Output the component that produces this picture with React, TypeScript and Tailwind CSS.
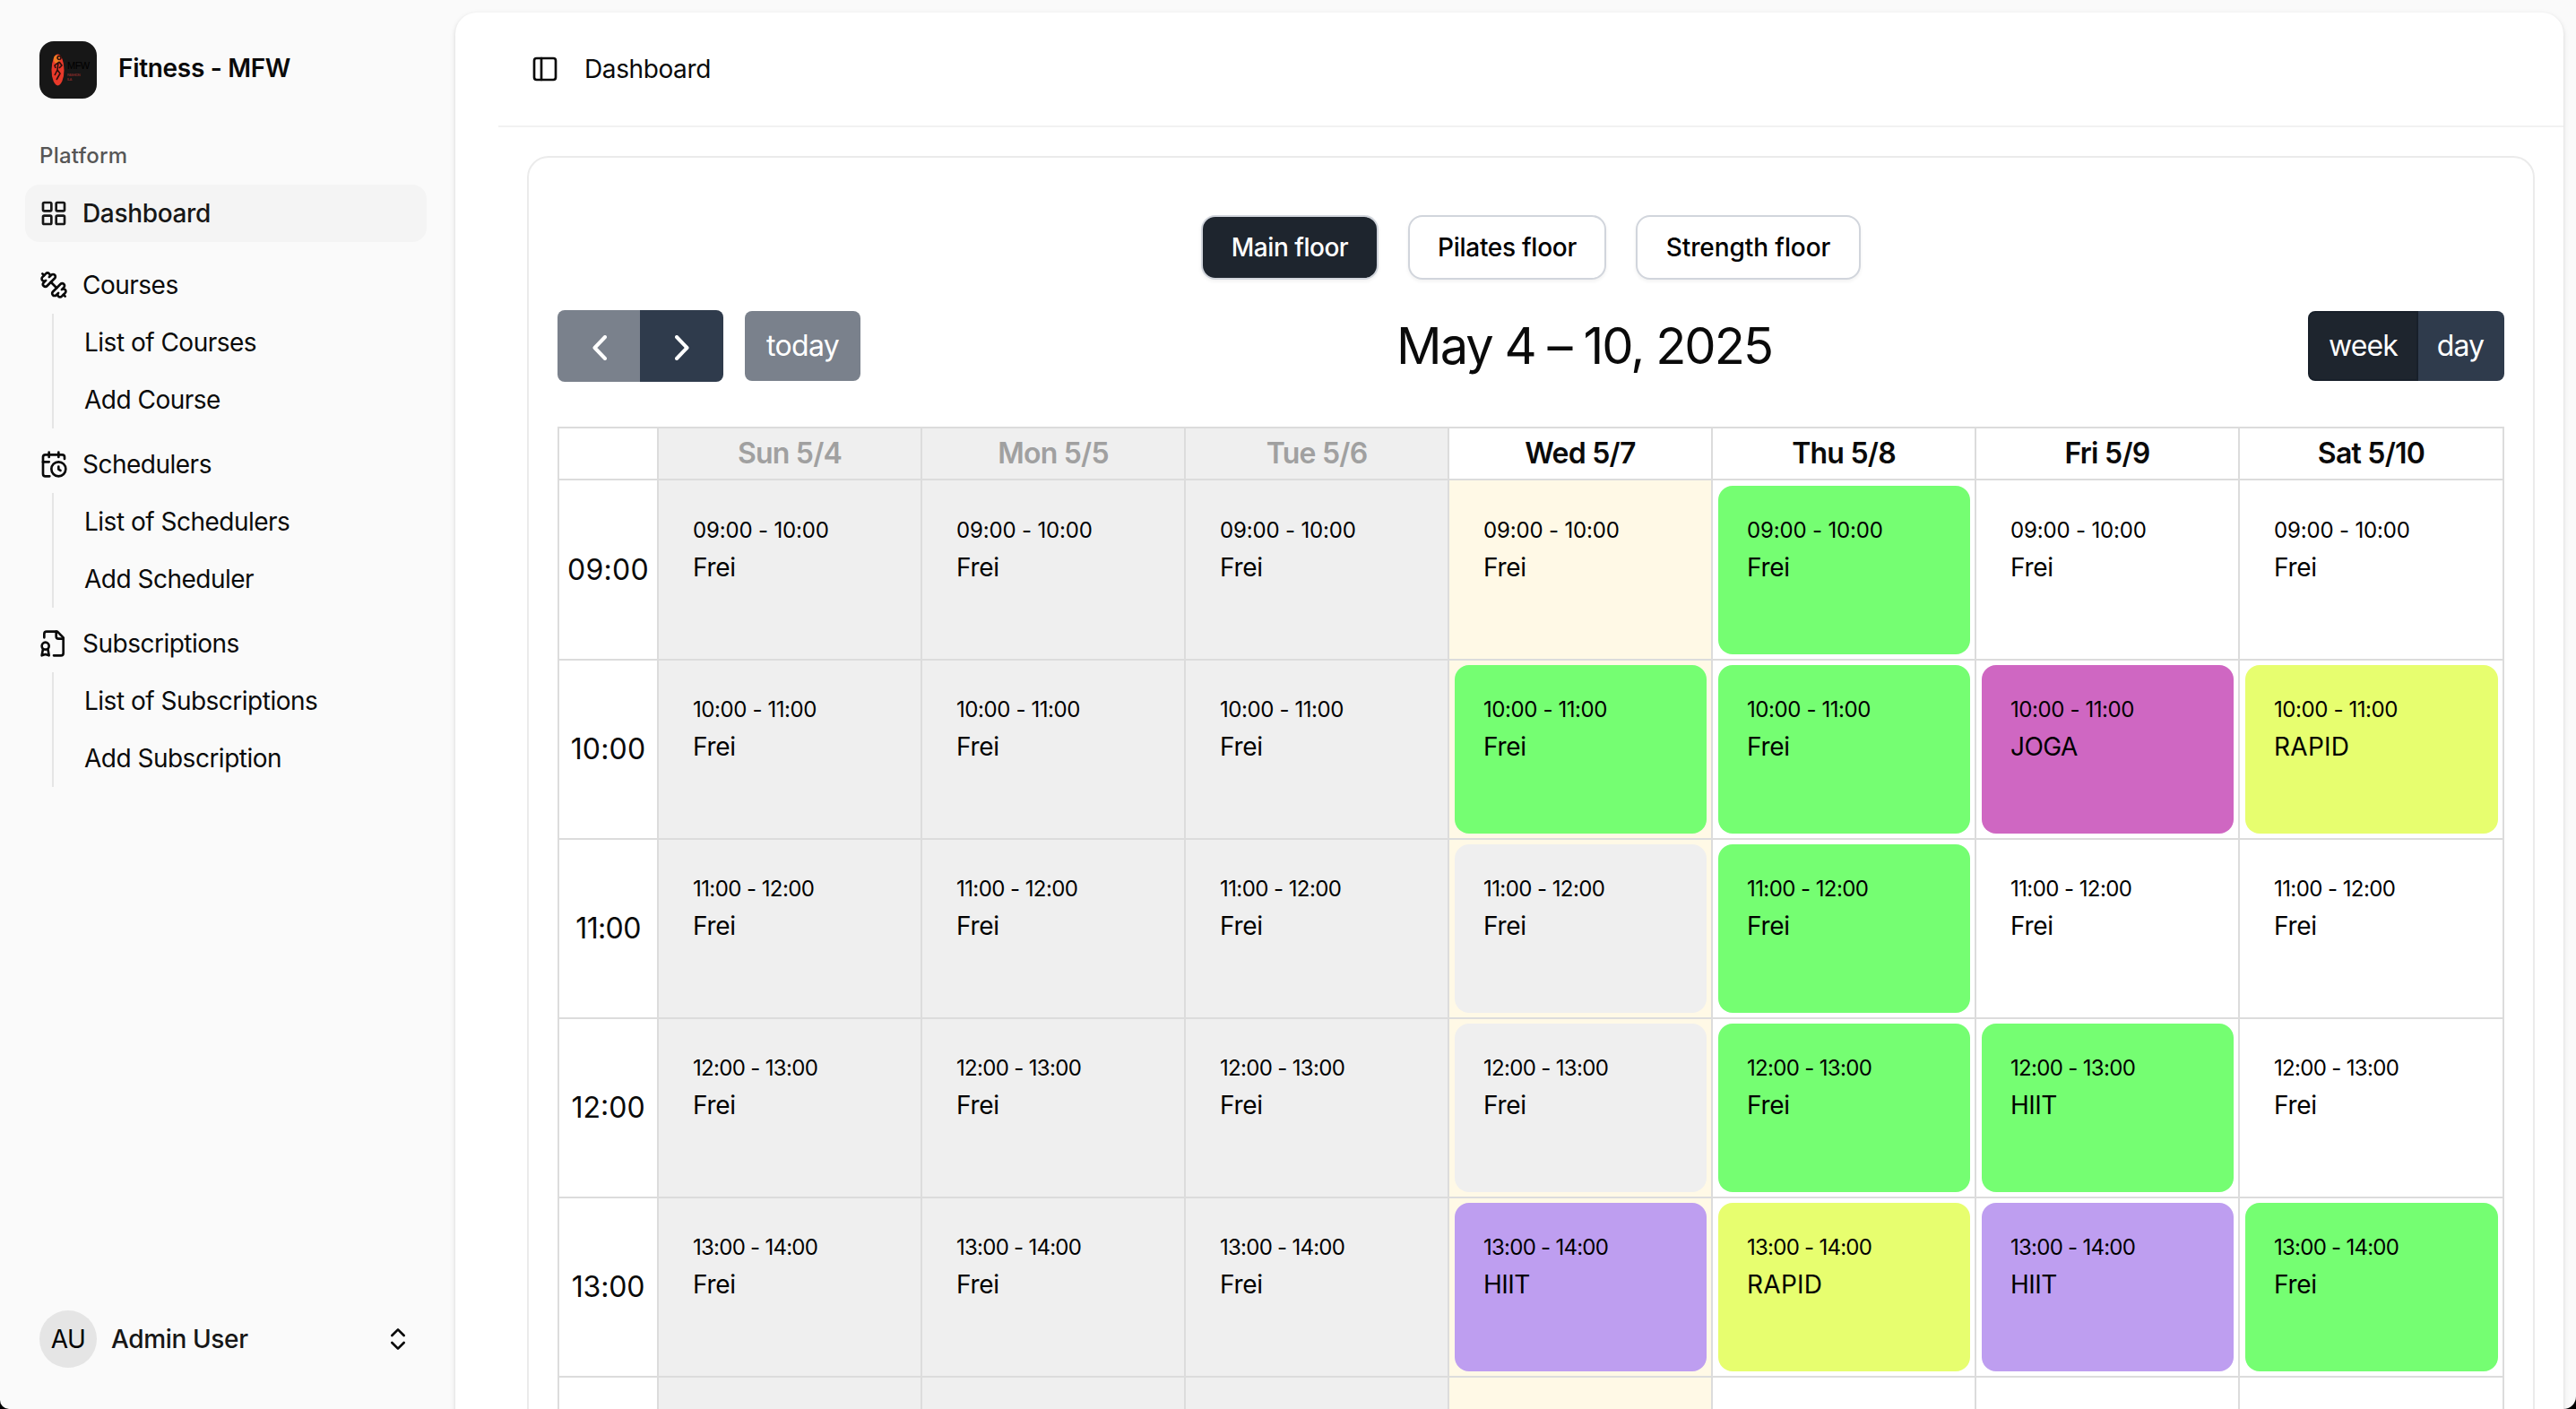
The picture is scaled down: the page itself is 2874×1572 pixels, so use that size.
import React, { useState } from 'react';
import { CalendarClock, ChevronsUpDown, LayoutGrid, PanelLeft } from 'lucide-react';

const DumbbellIcon: React.FC = () => (
    <svg viewBox="0 0 24 24" fill="none" stroke="currentColor" strokeWidth={2} strokeLinecap="round" strokeLinejoin="round" className="size-8 shrink-0">
        <path d="M14.4 14.4 9.6 9.6" />
        <path d="M18.657 21.485a2 2 0 1 1-2.829-2.828l-1.767 1.768a2 2 0 1 1-2.829-2.829l6.364-6.364a2 2 0 1 1 2.829 2.829l-1.768 1.767a2 2 0 1 1 2.828 2.829z" />
        <path d="m21.5 21.5-1.4-1.4" />
        <path d="M3.9 3.9 2.5 2.5" />
        <path d="M6.404 12.768a2 2 0 1 1-2.829-2.829l1.768-1.767a2 2 0 1 1-2.828-2.829l2.828-2.828a2 2 0 1 1 2.829 2.828l1.767-1.768a2 2 0 1 1 2.829 2.829z" />
    </svg>
);

const FileBadgeIcon: React.FC = () => (
    <svg viewBox="0 0 24 24" fill="none" stroke="currentColor" strokeWidth={2} strokeLinecap="round" strokeLinejoin="round" className="size-8 shrink-0">
        <path d="M12 22h6a2 2 0 0 0 2-2V7l-5-5H6a2 2 0 0 0-2 2v3" />
        <path d="M14 2v4a2 2 0 0 0 2 2h4" />
        <path d="M5 17a3 3 0 1 0 0-6 3 3 0 0 0 0 6Z" />
        <path d="M7 16.5 8 22l-3-1-3 1 1-5.5" />
    </svg>
);

const Logo: React.FC = () => (
    <div className="flex size-16 items-center rounded-2xl bg-[#171717] pl-[13px]">
        <svg viewBox="0 0 15 36" className="h-9 w-[15px] shrink-0">
            <ellipse cx="7.5" cy="18" rx="7" ry="17.5" fill="#e8392a" />
            <ellipse cx="6.5" cy="6" rx="3.6" ry="4.5" fill="#f07a22" />
            <path d="M9 6.5a2 2 0 1 1 .1 0M9 9l-5 4 1 3M9 9l3 4-3 3M8 10l-1 8 3 4-4 7M7 18l-3 6" fill="none" stroke="#2a0f0d" strokeWidth="1.6" />
        </svg>
        <div className="ml-[3px] flex flex-col font-['Liberation_Sans']">
            <span className="text-[11px] leading-[15px] text-black">MFW</span>
            <span className="text-[4px] leading-[5px] font-bold text-[#7c2a28]">FASHION</span>
            <span className="text-[4px] leading-[5px] font-bold text-[#7c2a28]">ILA</span>
        </div>
    </div>
);

const menu = [
    {
        title: 'Courses',
        icon: <DumbbellIcon />,
        items: ['List of Courses', 'Add Course'],
    },
    {
        title: 'Schedulers',
        icon: <CalendarClock className="size-8 shrink-0" />,
        items: ['List of Schedulers', 'Add Scheduler'],
    },
    {
        title: 'Subscriptions',
        icon: <FileBadgeIcon />,
        items: ['List of Subscriptions', 'Add Subscription'],
    },
];

const floors = [
    { name: 'Main floor', size: 'w-[198px] tracking-[-0.017em]' },
    { name: 'Pilates floor', size: 'w-[221px] tracking-[-0.01em]' },
    { name: 'Strength floor', size: 'w-[251px] tracking-[-0.003em]' },
];

const days = ['Sun 5/4', 'Mon 5/5', 'Tue 5/6', 'Wed 5/7', 'Thu 5/8', 'Fri 5/9', 'Sat 5/10'];
const PAST_DAYS = 3;
const TODAY = 3;

const colors: Record<string, string> = {
    none: '',
    gray: 'bg-[#efefef]',
    green: 'bg-[#75fe72]',
    pink: 'bg-[#cf67c2]',
    yellow: 'bg-[#e7fe6f]',
    purple: 'bg-[#be9ef0]',
};

const nameTracking: Record<string, string> = {
    Frei: 'tracking-[-0.01em]',
    RAPID: 'tracking-[0.01em]',
    JOGA: 'tracking-[-0.02em]',
    HIIT: 'tracking-[-0.02em]',
};

type Slot = [name: string, color: string];

type Hour = {
    start: string;
    end: string;
    axis: string;
    range: string;
    slots: Slot[];
};

const free: Slot = ['Frei', 'none'];

const hours: Hour[] = [
    {
        start: '09:00',
        end: '10:00',
        axis: 'tracking-[0.01em]',
        range: 'tracking-[-0.007em]',
        slots: [free, free, free, free, ['Frei', 'green'], free, free],
    },
    {
        start: '10:00',
        end: '11:00',
        axis: 'tracking-[0.005em]',
        range: 'tracking-[-0.017em]',
        slots: [free, free, free, ['Frei', 'green'], ['Frei', 'green'], ['JOGA', 'pink'], ['RAPID', 'yellow']],
    },
    {
        start: '11:00',
        end: '12:00',
        axis: 'tracking-[-0.02em]',
        range: 'tracking-[-0.024em]',
        slots: [free, free, free, ['Frei', 'gray'], ['Frei', 'green'], free, free],
    },
    {
        start: '12:00',
        end: '13:00',
        axis: 'tracking-normal',
        range: 'tracking-[-0.028em]',
        slots: [free, free, free, ['Frei', 'gray'], ['Frei', 'green'], ['HIIT', 'green'], free],
    },
    {
        start: '13:00',
        end: '14:00',
        axis: 'tracking-[-0.005em]',
        range: 'tracking-[-0.031em]',
        slots: [free, free, free, ['HIIT', 'purple'], ['RAPID', 'yellow'], ['HIIT', 'purple'], ['Frei', 'green']],
    },
];

const dayBackground = (index: number) => {
    if (index < PAST_DAYS) return 'bg-[#efefef]';
    if (index === TODAY) return 'bg-[#fff9e6]';
    return 'bg-white';
};

const Sidebar: React.FC = () => (
    <aside className="flex h-full w-[508px] shrink-0 flex-col px-7 text-[28px] tracking-[-0.018em]">
        <div className="mt-[46px] flex items-center gap-6 pl-4">
            <Logo />
            <span className="mb-1 font-semibold tracking-[-0.011em]">Fitness - MFW</span>
        </div>
        <div className="mt-8 flex h-16 items-center pl-4 text-2xl font-medium tracking-[0.01em] text-[#565656]">Platform</div>
        <nav>
            <a className="flex h-16 w-[448px] items-center gap-4 rounded-2xl bg-[#f4f4f4] pl-4 font-medium tracking-[-0.012em] text-[#171717]">
                <LayoutGrid className="size-8 shrink-0" />
                Dashboard
            </a>
            <div className="mt-4 flex flex-col gap-2">
                {menu.map((group) => (
                    <div key={group.title}>
                        <div className="flex h-16 items-center gap-4 pl-4">
                            {group.icon}
                            {group.title}
                        </div>
                        <ul className="ml-[30px] border-l-2 border-[#e5e5e5] pl-[34px]">
                            {group.items.map((item) => (
                                <li key={item} className="flex h-16 items-center">
                                    {item}
                                </li>
                            ))}
                        </ul>
                    </div>
                ))}
            </div>
        </nav>
        <div className="mt-auto mb-[46px] flex h-16 w-[448px] items-center pr-4 pl-4">
            <span className="flex size-16 items-center justify-center rounded-full bg-[#e5e5e5] text-black">AU</span>
            <span className="ml-4 font-medium tracking-[-0.013em] text-[#171717]">Admin User</span>
            <ChevronsUpDown className="ml-auto size-8" />
        </div>
    </aside>
);

const Calendar: React.FC = () => (
    <div className="mt-[50px] grid grid-cols-[111px_repeat(6,294px)_1fr] border-t-2 border-l-2 border-[#dcdcdc]">
        <div className="h-[58px] border-r-2 border-b-2 border-[#dcdcdc]" />
        {days.map((day, index) => (
            <div
                key={day}
                className={`flex h-[58px] items-center justify-center border-r-2 border-b-2 border-[#dcdcdc] text-[32px] font-semibold tracking-[-0.024em] ${
                    index < PAST_DAYS ? 'bg-[#efefef] text-[#a0a0a0]' : 'bg-white'
                }`}
            >
                {day}
            </div>
        ))}
        {hours.map((hour, row) => (
            <React.Fragment key={hour.start}>
                <div
                    className={`flex items-center justify-center border-r-2 border-b-2 border-[#dcdcdc] text-[32px] ${hour.axis} ${
                        row === 0 ? 'h-[201px]' : 'h-[200px]'
                    }`}
                >
                    {hour.start}
                </div>
                {hour.slots.map(([name, color], index) => (
                    <div
                        key={days[index]}
                        className={`border-r-2 border-b-2 border-[#dcdcdc] pr-[5px] pl-[6px] ${row === 0 ? 'pt-[6px]' : 'pt-[5px]'} ${dayBackground(index)}`}
                    >
                        <div className={`h-[188px] rounded-2xl pt-8 pl-8 text-black ${colors[color]}`}>
                            <div className={`text-2xl leading-[35px] ${hour.range}`}>
                                {hour.start} - {hour.end}
                            </div>
                            <div className={`text-[28px] leading-[48px] ${nameTracking[name]}`}>{name}</div>
                        </div>
                    </div>
                ))}
            </React.Fragment>
        ))}
        <div className="h-[200px] border-r-2 border-[#dcdcdc]" />
        {days.map((day, index) => (
            <div key={day} className={`border-r-2 border-[#dcdcdc] ${dayBackground(index)}`} />
        ))}
    </div>
);

const App: React.FC = () => {
    const [floor, setFloor] = useState('Main floor');

    return (
        <div className="h-[1572px] w-[2874px] overflow-hidden bg-black font-['Inter',sans-serif] text-[#0a0a0a]">
            <div className="flex h-full overflow-hidden rounded-br-[14px] rounded-bl-[10px] bg-[#fafafa]">
                <Sidebar />
                <main className="mt-[14px] h-[1700px] w-[2352px] shrink-0 rounded-3xl bg-white shadow-[0_2px_6px_rgba(0,0,0,0.1),0_2px_4px_rgba(0,0,0,0.06)]">
                    <header className="ml-12 flex h-32 items-center gap-7 border-b-2 border-[#f2f2f2] pl-9 text-[28px] tracking-[-0.014em]">
                        <PanelLeft className="size-8" />
                        Dashboard
                    </header>
                    <section className="mt-8 mr-8 ml-20 h-[1500px] rounded-3xl border-2 border-[#ebebeb] px-8 pt-16">
                        <div className="flex justify-center gap-[33px]">
                            {floors.map(({ name, size }) => (
                                <button
                                    key={name}
                                    onClick={() => setFloor(name)}
                                    className={`h-[72px] rounded-2xl border-2 border-[#d1d5dc] text-[28px] font-medium shadow-[0_2px_4px_rgba(0,0,0,0.06)] ${size} ${
                                        floor === name ? 'bg-[#1e252e] text-white' : 'bg-white text-black'
                                    }`}
                                >
                                    {name}
                                </button>
                            ))}
                        </div>
                        <div className="mt-[34px] flex h-20 items-center justify-between text-[32px] tracking-[-0.02em]">
                            <div className="flex items-center text-white">
                                <button className="flex h-20 w-[92px] items-center justify-center rounded-l-lg bg-[#7a818c]">
                                    <svg viewBox="0 0 16 28" fill="none" stroke="currentColor" strokeWidth={4} strokeLinecap="round" strokeLinejoin="round" className="mt-1 ml-0.5 h-7 w-4">
                                        <path d="M14 2 2.5 14 14 26" />
                                    </svg>
                                </button>
                                <button className="flex h-20 w-[93px] items-center justify-center rounded-r-lg bg-[#2f3b4c]">
                                    <svg viewBox="0 0 16 28" fill="none" stroke="currentColor" strokeWidth={4} strokeLinecap="round" strokeLinejoin="round" className="mt-1 h-7 w-4">
                                        <path d="M2 2 13.5 14 2 26" />
                                    </svg>
                                </button>
                                <button className="ml-6 h-[78px] w-[129px] rounded-lg bg-[#7a818c]">today</button>
                            </div>
                            <h2 className="text-[56px] leading-[80px] tracking-[-0.035em]">May 4 – 10, 2025</h2>
                            <div className="flex tracking-[-0.028em] text-white">
                                <button className="h-[78px] w-[123px] rounded-l-lg border-2 border-[#18202a] bg-[#1e252e]">week</button>
                                <button className="h-[78px] w-24 rounded-r-lg bg-[#2f3b4c] pr-0.5">day</button>
                            </div>
                        </div>
                        <Calendar />
                    </section>
                </main>
            </div>
        </div>
    );
};

export default App;
